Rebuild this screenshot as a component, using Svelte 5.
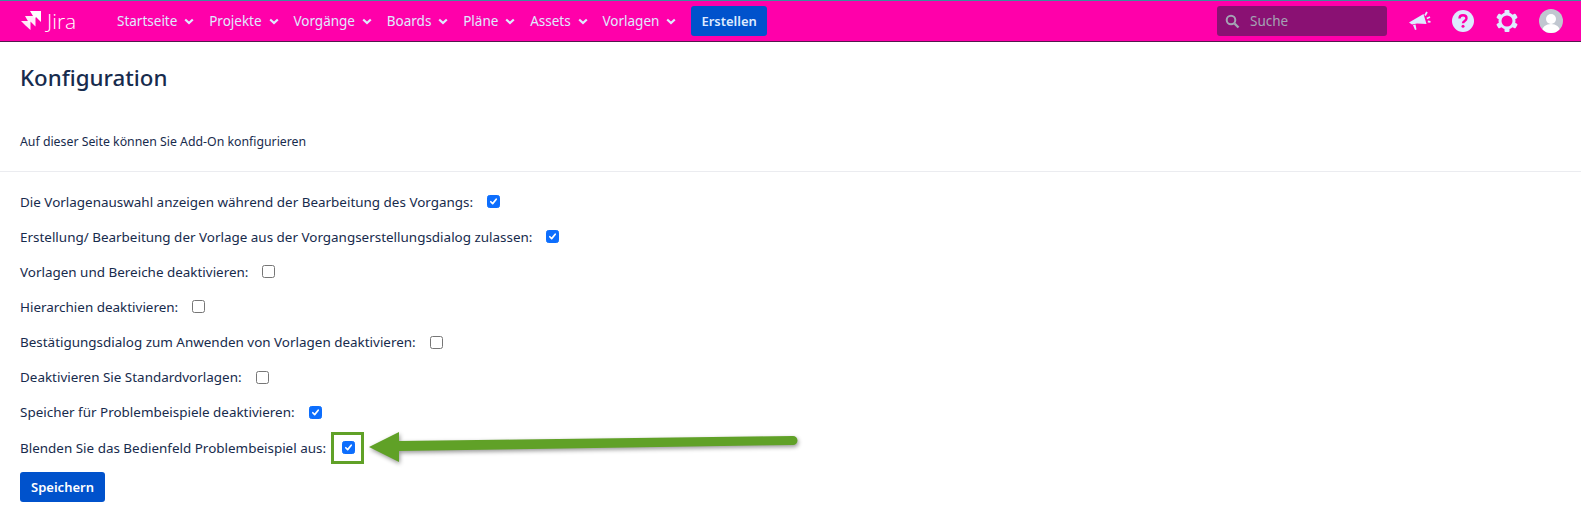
<script>
    const navItems = ["Startseite", "Projekte", "Vorgänge", "Boards", "Pläne", "Assets", "Vorlagen"];

    let options = $state([
        { label: "Die Vorlagenauswahl anzeigen während der Bearbeitung des Vorgangs:", checked: true },
        { label: "Erstellung/ Bearbeitung der Vorlage aus der Vorgangserstellungsdialog zulassen:", checked: true },
        { label: "Vorlagen und Bereiche deaktivieren:", checked: false },
        { label: "Hierarchien deaktivieren:", checked: false },
        { label: "Bestätigungsdialog zum Anwenden von Vorlagen deaktivieren:", checked: false },
        { label: "Deaktivieren Sie Standardvorlagen:", checked: false },
        { label: "Speicher für Problembeispiele deaktivieren:", checked: true },
        { label: "Blenden Sie das Bedienfeld Problembeispiel aus:", checked: true, marked: true }
    ]);
</script>

<header class="topbar">
    <a class="logo" href="#top">
        <svg width="20" height="20" viewBox="0 0 20 20" fill="#fff">
            <path d="M9 0h11v11l-5-5-1.500 1.500z" />
            <path d="M4 5h10.500v10.500l-5-5-1.500 1.500z" opacity="0.92" />
            <path d="M0 10h9.500v9l-5-4.500z" opacity="0.92" />
        </svg>
        <span class="logo-text">Jira</span>
    </a>
    <nav class="nav">
        {#each navItems as item}
            <a class="nav-item" href="#top">
                {item}
                <svg width="10" height="7" viewBox="0 0 10 7"><path d="M1.200 1.500 5 5l3.800-3.500" fill="none" stroke="currentColor" stroke-width="2.200" /></svg>
            </a>
        {/each}
        <button class="btn create">Erstellen</button>
    </nav>
    <div class="right">
        <div class="search">
            <svg width="15" height="15" viewBox="0 0 15 15"><circle cx="6" cy="6" r="4.300" fill="none" stroke="currentColor" stroke-width="2" /><path d="m9.500 9.500 4 4" stroke="currentColor" stroke-width="2.400" /></svg>
            <span>Suche</span>
        </div>
        <button class="icon-btn" aria-label="Feedback">
            <svg width="23" height="24" viewBox="0 0 23 24">
                <path d="M1 13.500 15.500 5l3 10-9.500-.5-5 1z" fill="#deebff" />
                <path d="m5 16 2.500-.5 1 5-1.500.5z" fill="#deebff" />
                <path d="M17 6.500 19 3M18.800 9.500 22 8M19.800 12.500l2.700.3" stroke="#deebff" stroke-width="1.800" fill="none" />
            </svg>
        </button>
        <button class="icon-btn" aria-label="Hilfe">
            <svg width="22" height="22" viewBox="0 0 22 22">
                <circle cx="11" cy="11" r="11" fill="#deebff" />
                <path d="M7.500 8.500C7.500 6.300 9 5.300 11 5.300s3.500 1.100 3.500 3c0 2.700-3.500 2.500-3.500 5" fill="none" stroke="#ff00aa" stroke-width="2.400" />
                <circle cx="11" cy="16.300" r="1.500" fill="#ff00aa" />
            </svg>
        </button>
        <button class="icon-btn" aria-label="Einstellungen">
            <svg width="22" height="22" viewBox="0 0 22 22">
                <circle cx="11" cy="11" r="7" fill="none" stroke="#deebff" stroke-width="3" />
                <g fill="#deebff">
                    <rect x="8.500" y="0" width="5" height="4" rx="1" />
                    <rect x="8.500" y="18" width="5" height="4" rx="1" />
                    <rect x="8.500" y="0" width="5" height="4" rx="1" transform="rotate(60 11 11)" />
                    <rect x="8.500" y="0" width="5" height="4" rx="1" transform="rotate(120 11 11)" />
                    <rect x="8.500" y="0" width="5" height="4" rx="1" transform="rotate(240 11 11)" />
                    <rect x="8.500" y="0" width="5" height="4" rx="1" transform="rotate(300 11 11)" />
                </g>
            </svg>
        </button>
        <button class="icon-btn" aria-label="Profil">
            <svg width="24" height="24" viewBox="0 0 24 24">
                <defs><clipPath id="avatar"><circle cx="12" cy="12" r="12" /></clipPath></defs>
                <circle cx="12" cy="12" r="12" fill="#c1c7d0" />
                <g clip-path="url(#avatar)" fill="#fff">
                    <circle cx="12" cy="10" r="5" />
                    <ellipse cx="12" cy="22" rx="9" ry="7" />
                </g>
            </svg>
        </button>
    </div>
</header>

<main class="page">
    <h1>Konfiguration</h1>
    <p class="intro">Auf dieser Seite können Sie Add-On konfigurieren</p>
    <hr />
    <form class="options" onsubmit={(e) => e.preventDefault()}>
        {#each options as option}
            <label class="row">
                <span>{option.label}</span>
                <span class="box" class:marked={option.marked}>
                    <input type="checkbox" bind:checked={option.checked} />
                    {#if option.marked}
                        <svg class="arrow" width="432" height="34" viewBox="0 0 432 34">
                            <path d="M0 16 30 1v9l394-5a4.500 4.500 0 0 1 0 9L30 20v11z" fill="#60a127" />
                        </svg>
                    {/if}
                </span>
            </label>
        {/each}
        <button class="btn save">Speichern</button>
    </form>
</main>

<style>
    :global(body) {
        margin: 0;
        background: #fff;
        font-family: "Noto Sans", "Open Sans", sans-serif;
        color: #172b4d;
    }

    a {
        color: inherit;
        text-decoration: none;
    }

    .topbar {
        display: flex;
        align-items: center;
        height: 40px;
        padding: 0 18px 0 21px;
        background: #ff00aa;
        border-top: 1px solid #3b8f9c;
        border-bottom: 1px solid #55184d;
        color: #deebff;
    }

    .logo {
        display: flex;
        align-items: center;
        gap: 6px;
        width: 96px;
        color: #fff;
    }

    .logo-text {
        font-family: "Open Sans", sans-serif;
        font-size: 21px;
        font-weight: 300;
    }

    .nav {
        display: flex;
        align-items: center;
        gap: 14.800px;
    }

    .nav-item {
        display: flex;
        align-items: center;
        gap: 7px;
        font-size: 13.500px;
    }

    .btn {
        border: none;
        border-radius: 3px;
        background: #0052cc;
        color: #fff;
        font-family: inherit;
        font-size: 13px;
        font-weight: 600;
    }

    .create {
        height: 30px;
        width: 76px;
        color: #deebff;
    }

    .right {
        display: flex;
        align-items: center;
        margin-left: auto;
        gap: 20px;
    }

    .search {
        display: flex;
        align-items: center;
        gap: 10px;
        width: 170px;
        height: 30px;
        box-sizing: border-box;
        padding-left: 8px;
        border-radius: 3px;
        background: #8a1173;
        color: #a4a4b4;
        font-size: 13.500px;
    }

    .icon-btn {
        display: flex;
        align-items: center;
        justify-content: center;
        width: 24px;
        height: 24px;
        padding: 0;
        border: none;
        background: none;
    }

    .page {
        padding: 0 20px;
    }

    h1 {
        margin: 0;
        padding-top: 21px;
        font-size: 22.300px;
        font-weight: 500;
        line-height: 30px;
    }

    .intro {
        margin: 40px 0 0;
        font-size: 12.300px;
        line-height: 18px;
    }

    hr {
        height: 1px;
        margin: 20px -20px 0;
        border: none;
        background: #ebecf0;
    }

    .options {
        display: flex;
        flex-direction: column;
        align-items: flex-start;
        padding-top: 12px;
    }

    .row {
        display: flex;
        align-items: center;
        gap: 14px;
        height: 35.150px;
        font-size: 13.450px;
    }

    .box {
        position: relative;
        display: flex;
        align-items: center;
        justify-content: center;
        width: 13px;
        height: 13px;
    }

    .box.marked {
        margin-left: 2px;
    }

    .box.marked::before {
        content: "";
        position: absolute;
        left: -11px;
        top: -9px;
        width: 33px;
        height: 32px;
        box-sizing: border-box;
        border: 3px solid #60a127;
    }

    input {
        appearance: none;
        position: relative;
        width: 13px;
        height: 13px;
        margin: 0;
        border: 1px solid #767676;
        border-radius: 2.500px;
        background: #fff;
    }

    input:checked {
        border-color: #0d6efd;
        background: #0d6efd url("data:image/svg+xml,%3Csvg xmlns='http://www.w3.org/2000/svg' viewBox='0 0 13 13'%3E%3Cpath fill='none' stroke='%23fff' stroke-linecap='round' stroke-linejoin='round' stroke-width='2' d='M3.300 6.800 5.500 9 9.700 3.800'/%3E%3C/svg%3E") center / 100% no-repeat;
    }

    .arrow {
        position: absolute;
        left: 27px;
        top: -10px;
        filter: drop-shadow(1px 2px 2px rgba(0, 0, 0, 0.4));
    }

    .save {
        height: 30px;
        width: 85px;
        margin-top: 7px;
    }
</style>
